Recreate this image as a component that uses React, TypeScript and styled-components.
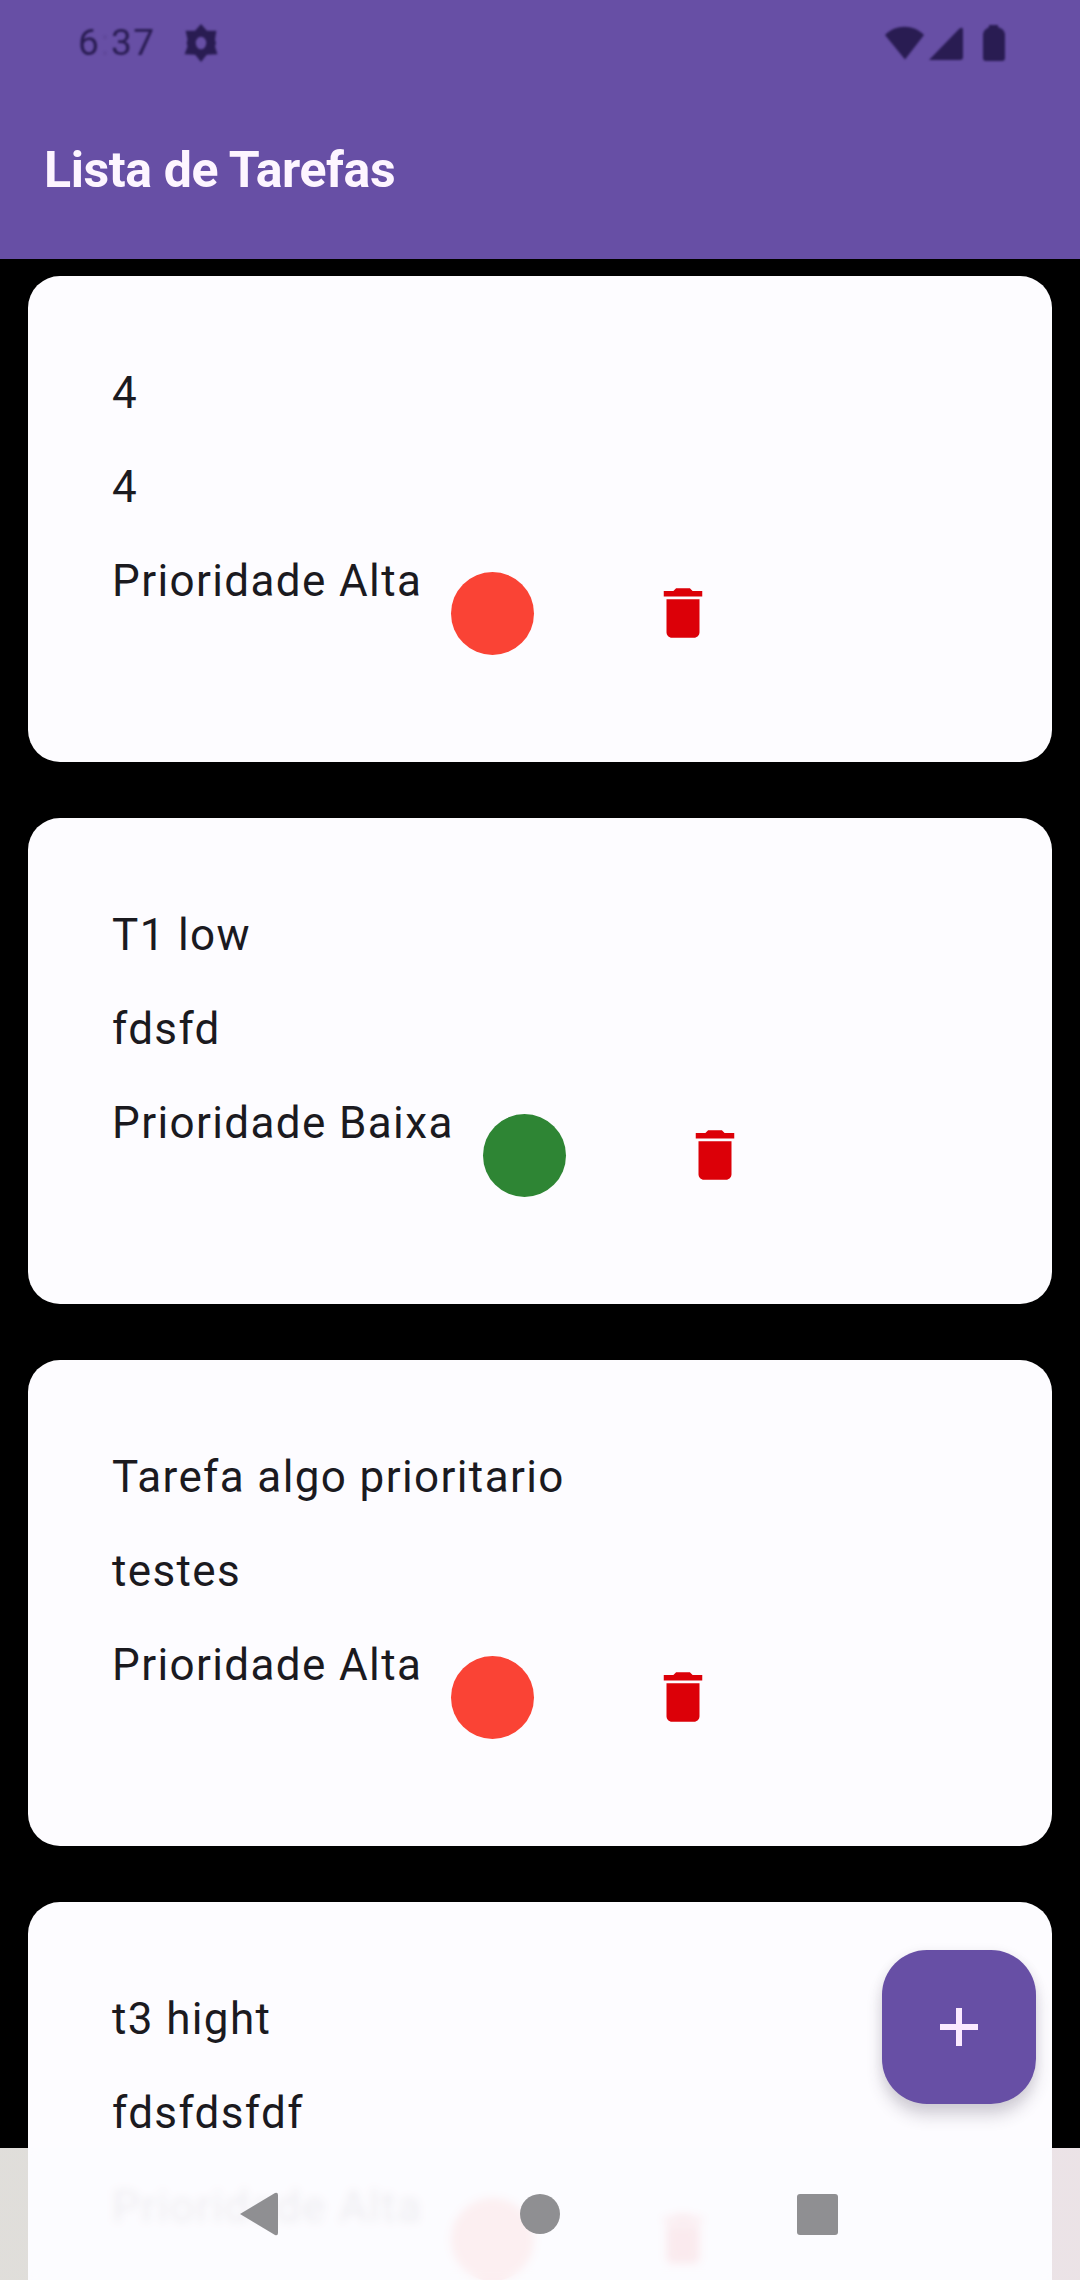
import React from "react";
import styled, { createGlobalStyle } from "styled-components";

const GlobalStyle = createGlobalStyle`
  *, *::before, *::after { box-sizing: border-box; }
  html, body { margin: 0; padding: 0; background: #000; }
  body { font-family: Roboto, "Noto Sans", sans-serif; }
`;

const Screen = styled.div`
  position: relative;
  display: flex;
  flex-direction: column;
  width: 1080px;
  height: 2280px;
  overflow: hidden;
  background: #000;
`;

const Header = styled.header`
  flex: none;
  display: flex;
  flex-direction: column;
  height: 259px;
  background: #674fa5;
`;

const StatusBar = styled.div`
  display: flex;
  align-items: center;
  height: 86px;
  padding: 0 74px 0 78px;
  color: #291c52;
  filter: blur(1.2px);
`;

const Clock = styled.span`
  width: 102px;
  font-size: 37px;
  line-height: 44px;
  letter-spacing: 1.6px;
`;

const Colon = styled.span`
  opacity: 0.1;
`;

const StatusIcons = styled.div`
  display: flex;
  align-items: center;
  margin-left: auto;
`;

const StatusGlyph = styled.svg<{ $gap?: number }>`
  display: block;
  flex: none;
  margin-left: ${({ $gap = 0 }) => $gap}px;
  fill: currentColor;
`;

const Title = styled.h1`
  margin: 0;
  padding: 53px 0 0 44px;
  font-size: 50px;
  font-weight: 700;
  line-height: 62px;
  letter-spacing: -0.4px;
  color: #fdf5ff;
`;

const TaskList = styled.main`
  flex: 1;
  display: flex;
  flex-direction: column;
  gap: 56px;
  padding: 17px 28px 0;
`;

const Card = styled.article`
  flex: none;
  display: flex;
  flex-direction: column;
  gap: 30px;
  height: 486px;
  padding: 85px 84px 84px;
  border-radius: 32px;
  background: #fdfcff;
`;

const Line = styled.p`
  margin: 0;
  font-size: 44px;
  line-height: 64px;
  letter-spacing: 1.375px;
  white-space: nowrap;
  color: #1b1a1f;
`;

const PriorityRow = styled.div`
  display: flex;
  align-items: center;
  height: 128px;
`;

const PriorityLabel = styled(Line)`
  align-self: flex-start;
`;

const Dot = styled.span<{ $color: string }>`
  width: 83px;
  height: 83px;
  margin-left: 29px;
  border-radius: 50%;
  background: ${({ $color }) => $color};
`;

const DeleteButton = styled.button`
  display: grid;
  place-items: center;
  width: 126px;
  height: 128px;
  margin: 0 0 0 86px;
  padding: 0;
  border: 0;
  background: none;
  color: #dc0008;
`;

const Fab = styled.button`
  position: absolute;
  left: 882px;
  top: 1950px;
  display: grid;
  place-items: center;
  width: 154px;
  height: 154px;
  padding: 0;
  border: 0;
  border-radius: 45px;
  background: #674fa5;
  box-shadow: 0 12px 16px rgba(60, 50, 75, 0.2), 0 2px 12px rgba(60, 50, 75, 0.08);
`;

const NavBar = styled.nav`
  position: absolute;
  left: 0;
  right: 0;
  bottom: 0;
  display: flex;
  align-items: center;
  justify-content: space-between;
  height: 132px;
  padding: 0 242px 0 240px;
  background: linear-gradient(
    90deg,
    rgba(248, 246, 242, 0.9) 28px,
    rgba(253, 252, 255, 0.9) 28px,
    rgba(253, 252, 255, 0.9) 1052px,
    rgba(255, 246, 250, 0.92) 1052px
  );
`;

const CardSurface = styled.div`
  position: absolute;
  inset: 0 28px;
  background: rgba(253, 252, 255, 0.3);
  backdrop-filter: blur(4px);
`;

const NavGlyph = styled.svg<{ $nudge?: number }>`
  position: relative;
  display: block;
  margin-left: ${({ $nudge = 0 }) => $nudge}px;
  fill: #8f8f92;
`;

const RED = "#fa4335";
const GREEN = "#2e8534";

const tasks = [
  { title: "4", description: "4", priority: "Prioridade Alta", color: RED },
  { title: "T1 low", description: "fdsfd", priority: "Prioridade Baixa", color: GREEN },
  { title: "Tarefa algo prioritario", description: "testes", priority: "Prioridade Alta", color: RED },
  { title: "t3 hight", description: "fdsfdsfdf", priority: "Prioridade Alta", color: RED },
];

function TrashIcon() {
  return (
    <svg width="66" height="66" viewBox="0 0 24 24" fill="currentColor">
      <path d="M6 19c0 1.1.9 2 2 2h8c1.1 0 2-.9 2-2V7H6v12zM19 4h-3.5l-1-1h-5l-1 1H5v2h14V4z" />
    </svg>
  );
}

function TaskCard({ title, description, priority, color }: (typeof tasks)[number]) {
  return (
    <Card>
      <Line>{title}</Line>
      <Line>{description}</Line>
      <PriorityRow>
        <PriorityLabel>{priority}</PriorityLabel>
        <Dot $color={color} />
        <DeleteButton aria-label="Excluir">
          <TrashIcon />
        </DeleteButton>
      </PriorityRow>
    </Card>
  );
}

export default function App() {
  return (
    <>
      <GlobalStyle />
      <Screen>
        <Header>
          <StatusBar>
            <Clock>
              6<Colon>:</Colon>37
            </Clock>
            <StatusGlyph width="42" height="42" viewBox="0 0 24 24">
              <path
                fillRule="evenodd"
                d="M12 1.2 15.4 5 20.8 5 20 10 20.6 12 20 14 21.4 18.4 15.3 18.7 12 22.8 8.7 18.7 2.6 18.4 4.3 14 3.8 12 4.3 10 3.2 5 8.6 5ZM12 8.4a3 3.6 0 1 0 0 7.2 3 3.6 0 0 0 0-7.2Z"
              />
            </StatusGlyph>
            <StatusIcons>
              <StatusGlyph width="39" height="34" viewBox="0 0 39 34">
                <path d="M0 9C10-2 29-2 39 9L20 33.5Z" />
              </StatusGlyph>
              <StatusGlyph $gap={5} width="35" height="34" viewBox="0 0 35 34">
                <path d="M0 34 30 3Q34 0 34 4V31Q34 34 31 34Z" />
              </StatusGlyph>
              <StatusGlyph $gap={18} width="24" height="38" viewBox="0 0 24 38">
                <path d="M7 3V1H16V3L20 5Q23 7 23 10V34Q23 37 20 37H4Q1 37 1 34V10Q1 7 4 5Z" />
              </StatusGlyph>
            </StatusIcons>
          </StatusBar>
          <Title>Lista de Tarefas</Title>
        </Header>
        <TaskList>
          {tasks.map((task) => (
            <TaskCard key={task.title} {...task} />
          ))}
        </TaskList>
        <Fab aria-label="Adicionar">
          <svg width="38" height="38" viewBox="0 0 38 38" fill="#fbeaff">
            <path d="M16 0h6v16h16v6H22v16h-6V22H0v-6h16Z" />
          </svg>
        </Fab>
        <NavBar>
          <CardSurface />
          <NavGlyph width="38" height="44" viewBox="0 0 38 44">
            <path d="M0 22 35 1Q38 0 38 3V41Q38 44 35 43Z" />
          </NavGlyph>
          <NavGlyph $nudge={4} width="40" height="40" viewBox="0 0 40 40">
            <circle cx="20" cy="20" r="20" />
          </NavGlyph>
          <NavGlyph width="41" height="41" viewBox="0 0 41 41">
            <rect width="41" height="41" rx="3" />
          </NavGlyph>
        </NavBar>
      </Screen>
    </>
  );
}
